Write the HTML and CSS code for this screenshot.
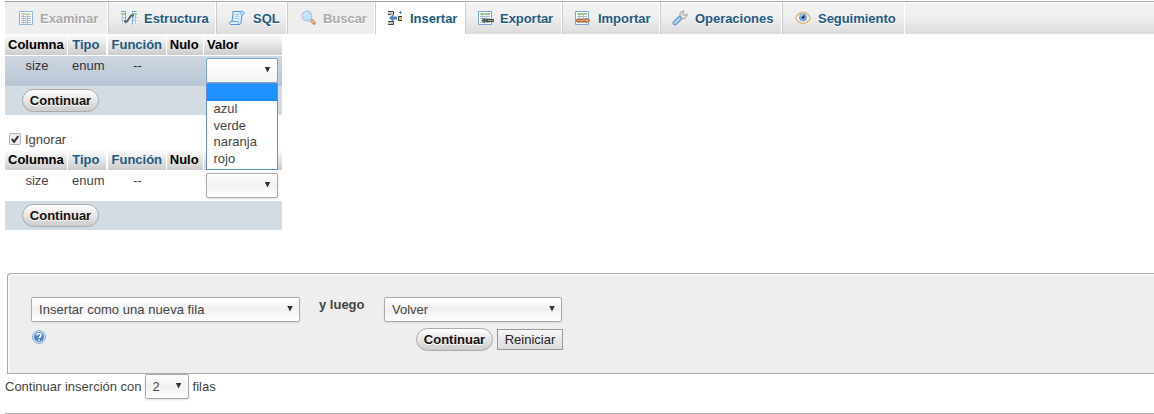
FILE: index.html
```html
<!DOCTYPE html>
<html lang="es">
<head>
<meta charset="utf-8">
<title>Insertar</title>
<link rel="stylesheet" href="styles.css">
</head>
<body>
<nav class="tabs">
  <a class="tab tab-browse disabled"><svg class="icon" viewBox="0 0 16 16"><path fill="#fff" stroke="#86a9d8" d="M1.500 1.500h13v13h-13z"/><path fill="#b9d7b0" d="M3 3h10v2H3z"/><path stroke="#a5b5ca" d="M3 6.500h10M3 8.500h10M3 10.500h10M3 12.500h10M5.500 5v9M9.500 5v9" fill="none"/></svg>Examinar</a>
  <a class="tab tab-structure"><svg class="icon" viewBox="0 0 16 16"><path fill="#eef5fb" d="M0 1h5v13H0zM11 1h5v13h-5z"/><path fill="none" stroke="#74a3d8" d="M0 1.500h4.500v13M15.500 1.500h-4v13"/><path stroke="#a9cf91" stroke-width="2" d="M0 4h4M12 4h4"/><path stroke="#b4c3d5" d="M0 7.500h4M0 10.500h4M12 7.500h4M12 10.500h4M1.500 5v9M14.500 5v9"/><path fill="none" stroke="#53685b" stroke-width="2" d="M3 11.500h3l4-6h3"/></svg>Estructura</a>
  <a class="tab tab-sql"><svg class="icon" viewBox="0 0 16 16"><path fill="#d6edfb" stroke="#5595d3" d="M4 1.500h9.500c2 0 2 3 0 3H13l-1 8c0 1-1 2-2 2H2c-2 0-2-3 0-3h1l1-8c0-1-1-2 0-2z"/><path fill="none" stroke="#6da7dc" d="M12 1.500c-1 1 0 3 1 3M3 11.500h6c1 0 0 2 1 3"/><path stroke="#a9cdec" d="M6 4.500h4M6 6.500h4M5 8.500h5"/></svg>SQL</a>
  <a class="tab tab-search disabled"><svg class="icon" viewBox="0 0 16 16"><path stroke="#b07a55" stroke-width="3.400" stroke-linecap="round" d="M10 10l3 3"/><path stroke="#efb26c" stroke-width="1.800" d="M9.500 10l3.500 3"/><circle cx="6" cy="6" r="4.800" fill="#b4e2fa" stroke="#9fc6ec" stroke-width="1.400"/><path fill="none" stroke="#fff" d="M3 6c0-2 1-3 3-3"/></svg>Buscar</a>
  <a class="tab tab-insert active"><svg class="icon" viewBox="0 0 16 16"><path fill="#c8c8c8" d="M0 1h6v4H0zM0 11h6v4H0z"/><path fill="none" stroke="#444" d="M0 1.500h5.500V5M0 4.500h3M0 11.500h5.500v3H0"/><path fill="#4f7fc9" d="M1 8l4.500-4v2.500H9v3H5.500V12z"/><path fill="#f3b64b" d="M11 6h3v5h-3z"/><path fill="none" stroke="#333" d="M14 6.500h-3.500v4H14"/><path fill="none" stroke="#5d8ed6" d="M12.500 1v3M11 2.500h3"/></svg>Insertar</a>
  <a class="tab tab-export"><svg class="icon" viewBox="0 0 16 16"><path fill="#fff" stroke="#79a5d5" d="M.5 1.500h13v13H.5z"/><path stroke="#a0cb91" stroke-width="2" d="M2 4h10"/><path stroke="#aabfd4" d="M2 6.500h10M2 8.500h10M2 12.500h10M4.500 5v8M8.500 5v8"/><path fill="#59685d" d="M3 10.500L7 7.500V9h3v3H7v1.500z"/><path fill="#aaa" stroke="#444" d="M9.500 9.500h6v2h-6z"/></svg>Exportar</a>
  <a class="tab tab-import"><svg class="icon" viewBox="0 0 16 16"><path fill="#fff" stroke="#79a5d5" d="M.5 1.500h13v13H.5z"/><path stroke="#a0cb91" stroke-width="2" d="M2 4h10"/><path stroke="#aabfd4" d="M2 6.500h10M2 8.500h10M2 12.500h10M4.500 5v8M8.500 5v8"/><path fill="#e5a361" stroke="#b46a35" d="M1.500 9.500h9.500V8l4 2.500-4 2.500v-1.500H1.500z"/></svg>Importar</a>
  <a class="tab tab-operations"><svg class="icon" viewBox="0 0 16 16"><path fill="#e5e5e5" stroke="#979797" d="M8 8.500V4c0-2 2-3 4-3l-1.500 3L12 5.500l3-1.500c.5 2-1 4-3 4.500H9.500z"/><path stroke="#568dcc" stroke-width="4.600" stroke-linecap="round" d="M3 13l4.500-4.500"/><path stroke="#a9cff2" stroke-width="2.800" stroke-linecap="round" d="M3 13l4.500-4.500"/></svg>Operaciones</a>
  <a class="tab tab-tracking"><svg class="icon" viewBox="0 0 16 16"><path fill="#fff" stroke="#dfb77b" stroke-width="1.500" d="M.8 8C4 .8 12 .8 15.200 8 12 15 4 15 .8 8z"/><circle cx="8" cy="7.500" r="4" fill="#78a8df"/><circle cx="8" cy="7" r="1.700" fill="#17345f"/><path fill="#fff" d="M6 5h1.500v1.500H6z"/></svg>Seguimiento</a>
</nav>

<section class="row-form">
  <div class="grid head"><b>Columna</b><b class="link">Tipo</b><b class="link">Función</b><b>Nulo</b><b>Valor</b></div>
  <div class="grid data marked"><span>size</span><span>enum</span><span>--</span><span></span>
    <div class="value"><div class="select value-select focused"><i class="arrow"></i></div>
      <ul class="options"><li class="selected"></li><li>azul</li><li>verde</li><li>naranja</li><li>rojo</li></ul>
    </div>
  </div>
  <div class="foot"><button class="go">Continuar</button></div>
</section>

<label class="ignore"><svg class="check" viewBox="0 0 13 13"><rect x=".5" y=".5" width="12" height="12" rx="1.500" fill="#eee" stroke="#aaa"/><path fill="none" stroke="#333" stroke-width="2.200" d="M3 6.500l2.500 3L10 3.300"/></svg>Ignorar</label>

<section class="row-form">
  <div class="grid head"><b>Columna</b><b class="link">Tipo</b><b class="link">Función</b><b>Nulo</b><b></b></div>
  <div class="grid data"><span>size</span><span>enum</span><span>--</span><span></span>
    <div class="value"><div class="select value-select"><i class="arrow"></i></div></div>
  </div>
  <div class="foot"><button class="go">Continuar</button></div>
</section>

<section class="actions">
  <div class="insert-mode"><div class="select">Insertar como una nueva fila<i class="arrow"></i></div>
    <svg class="help" viewBox="0 0 16 16"><circle cx="8" cy="8" r="6.500" fill="#d3e5f7" stroke="#84aedd"/><circle cx="8" cy="8" r="4.900" fill="#4d80c8"/><path fill="none" stroke="#fff" stroke-width="1.600" d="M6 6.500c0-2.700 4-2.700 4 0C10 8 8 7.700 8 9.300M8 10.500V12"/></svg>
  </div>
  <b class="then">y luego</b>
  <div class="after-insert"><div class="select">Volver<i class="arrow"></i></div>
    <div class="buttons"><button class="go">Continuar</button><button class="reset">Reiniciar</button></div>
  </div>
</section>

<div class="continue">Continuar inserción con <div class="select count">2<i class="arrow"></i></div> filas</div>
</body>
</html>
```
FILE: styles.css
```css
* { box-sizing: border-box; }
body {
  margin: 0;
  padding: 1px 0 0 5px;
  height: 414px;
  overflow: hidden;
  background: #fff;
  color: #444;
  font: 13px/15px "Liberation Sans", Arial, sans-serif;
}
.tabs {
  display: flex;
  height: 33px;
  border-top: 1px solid #a5a5a5;
  background: linear-gradient(#fff 1px, #f3f3f3 1px, #eee 50%, #dcdcdc);
}
.tab {
  display: flex;
  align-items: center;
  gap: 7px;
  padding: 0 0 0 12px;
  border-left: 1px solid #ccc;
  border-right: 1px solid #fff;
  color: #235a81;
  font-weight: bold;
  letter-spacing: -.04px;
  text-shadow: 0 1px 0 #fff;
  white-space: nowrap;
}
.tab-browse { width: 103px; padding-left: 13px; gap: 6px; border-left: 0; }
.tab-structure { width: 108px; }
.tab-sql { width: 71px; gap: 8px; }
.tab-search { width: 88px; padding-left: 13px; gap: 6px; }
.tab-insert { width: 90px; gap: 6px; }
.tab-export { width: 97px; padding-left: 12px; gap: 6px; }
.tab-import { width: 98px; }
.tab-operations { width: 122px; padding-left: 11px; }
.tab-tracking { width: 123px; }
.disabled { background: #eee; color: #aaa; }
.active { background: #fff; }
.icon { width: 16px; height: 16px; flex: none; }
.disabled .icon { opacity: .85; }
.row-form { width: 277px; }
.grid { display: grid; grid-template-columns: 62px 38px 58px 36px 78px; }
.head { height: 21px; column-gap: 1.250px; color: #000; }
.head b {
  padding: 3px 3px 0;
  background: linear-gradient(#fff, #ccc);
  white-space: nowrap;
}
.head .link { padding-left: 4px; color: #235a81; }
.data { height: 31px; column-gap: 1.250px; text-align: center; }
.data > span { padding: 3px 0 0 2px; }
.marked {
  background: linear-gradient(#ced6df, #b6c6d7) 0 1px no-repeat;
  color: #333;
}
.value { position: relative; padding: 3px 2px 0; }
.foot { height: 29px; padding: 3px 17px; background: #d3dce3; }
.go {
  display: block;
  width: 77px;
  height: 23px;
  padding: 0;
  border: 1px solid #aaa;
  border-radius: 12px;
  background: linear-gradient(#fff, #ccc);
  color: #111;
  font: bold 13px/20px "Liberation Sans", Arial, sans-serif;
  text-shadow: 0 1px 0 #fff;
}
.select {
  display: flex;
  align-items: center;
  justify-content: space-between;
  height: 25px;
  padding: 0 6px 0 7px;
  border: 1px solid #aaa;
  border-radius: 2px;
  background: linear-gradient(#fff, #f1f1f1 50%, #fff);
  box-shadow: 0 1px 2px #ddd;
  color: #444;
}
.arrow {
  width: 6px;
  height: 6px;
  margin-bottom: 2px;
  background: #333;
  clip-path: polygon(0 0, 100% 0, 50% 100%);
}
.value-select { width: 72px; justify-content: flex-end; margin-left: -.5px; }
.focused { border-color: #79a1d6; background: linear-gradient(#fff, #f5f5f5); }
.options {
  position: absolute;
  z-index: 2;
  top: 28px;
  left: 1.500px;
  width: 72px;
  height: 87px;
  margin: 0;
  padding: 0;
  border: 1px solid #648fcd;
  background: #fff;
  color: #444;
  list-style: none;
  text-align: left;
}
.options li { height: 16.600px; padding: 0 7px; line-height: 16px; }
.options .selected { height: 17px; background: #1e90ff; }
.ignore { display: flex; align-items: flex-end; gap: 4px; height: 34px; padding: 0 0 2px 4px; }
.check { width: 12px; height: 12px; margin-bottom: 2px; }
.actions {
  display: flex;
  height: 101px;
  margin: 43px 0 0 2px;
  padding: 23px 0 0 23px;
  border: 1px solid #aaa;
  border-right: 0;
  border-radius: 4px 0 0 0;
  background: #eee;
  box-shadow: inset 1px 1px 2px #fff;
}
.insert-mode { width: 269px; letter-spacing: .05px; }
.help { display: block; width: 16px; height: 16px; margin-top: 7px; }
.then { width: 84px; padding-left: 19px; }
.after-insert { width: 179px; }
.after-insert > .select { width: 178px; }
.buttons { display: flex; justify-content: flex-end; gap: 4px; margin-top: 6px; }
.reset {
  width: 66px;
  height: 21px;
  margin-top: 1px;
  padding: 0;
  border: 1px solid #999;
  background: linear-gradient(#f6f6f6, #ddd);
  color: #222;
  font: 13px/17px "Liberation Sans", Arial, sans-serif;
}
.continue {
  display: flex;
  align-items: center;
  gap: 4px;
  height: 40px;
  padding-bottom: 14px;
  border-bottom: 1px solid #bbb;
}
.count { width: 44px; margin-left: -1px; }
```
